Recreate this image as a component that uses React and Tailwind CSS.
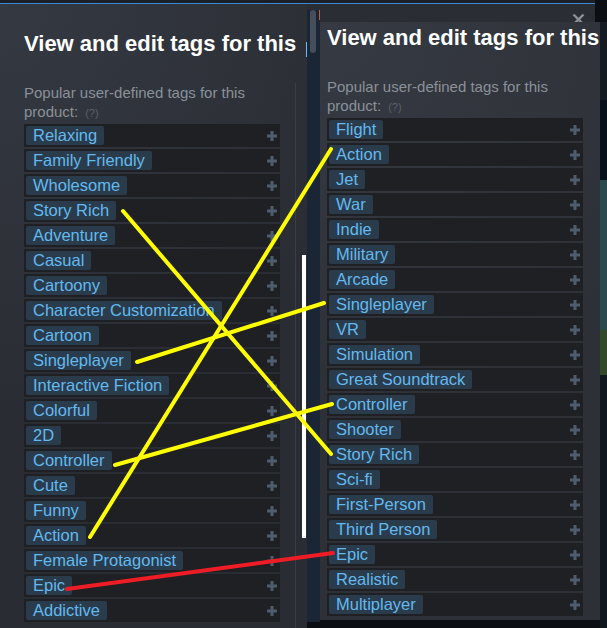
import React from "react";

const LEFT = [
  "Relaxing",
  "Family Friendly",
  "Wholesome",
  "Story Rich",
  "Adventure",
  "Casual",
  "Cartoony",
  "Character Customization",
  "Cartoon",
  "Singleplayer",
  "Interactive Fiction",
  "Colorful",
  "2D",
  "Controller",
  "Cute",
  "Funny",
  "Action",
  "Female Protagonist",
  "Epic",
  "Addictive",
];

const RIGHT = [
  "Flight",
  "Action",
  "Jet",
  "War",
  "Indie",
  "Military",
  "Arcade",
  "Singleplayer",
  "VR",
  "Simulation",
  "Great Soundtrack",
  "Controller",
  "Shooter",
  "Story Rich",
  "Sci-fi",
  "First-Person",
  "Third Person",
  "Epic",
  "Realistic",
  "Multiplayer",
];

function Plus() {
  return (
    <svg width="10" height="10" viewBox="0 0 10 10" className="shrink-0 self-center">
      <rect x="3.5" y="0" width="3" height="10" fill="#4d5d6e" />
      <rect x="0" y="3.5" width="10" height="3" fill="#4d5d6e" />
    </svg>
  );
}

function TagRow({ label }) {
  return (
    <div className="flex h-[23px] items-start justify-between bg-[#1f2024] pl-[2px] pr-[3px]">
      <span className="mt-[2px] flex h-[19px] items-center rounded-[2px] bg-[#2a3c4c] px-[7px] text-[16.5px] leading-none text-[#63b9ef] whitespace-nowrap">
        {label}
      </span>
      <Plus />
    </div>
  );
}

function Subtitle() {
  return (
    <p className="h-[38px] text-[15px] leading-[19px] text-[#8a9199]">
      Popular user-defined tags for this product:
      <span className="ml-[7px] text-[11px] leading-none text-[#59616b]">(?)</span>
    </p>
  );
}

function TagList({ tags }) {
  return (
    <div className="mt-[3px] flex w-[256px] flex-col gap-[2px]">
      {tags.map((t, i) => (
        <TagRow key={i} label={t} />
      ))}
    </div>
  );
}

export default function App() {
  return (
    <div
      className="relative flex h-[628px] w-[607px] flex-col overflow-hidden bg-[#0b0e12]"
      style={{ fontFamily: '"Liberation Sans", Arial, sans-serif' }}
    >
      {/* top bar */}
      <div className="flex h-[4px] w-[595px] flex-col">
        <div className="h-[3px] bg-[#1c1f25]" />
        <div className="h-[1px] bg-[#3a8ad6]" />
      </div>

      <div className="flex flex-1">
        {/* left dialog */}
        <div className="flex w-[307px] flex-col bg-[#292c33] bg-[radial-gradient(circle_at_top_left,rgba(74,81,92,0.35)_0%,rgba(75,81,92,0)_60%)] pl-[24px]">
          <div className="flex items-start justify-between pt-[26px]">
            <h1 className="whitespace-nowrap text-[22px] font-bold leading-[28px] text-white">
              View and edit tags for this
            </h1>
            <span className="mt-[12px] h-[15px] w-[1px] bg-[#67c1f5]" />
          </div>
          <div className="mt-[25px] flex w-[272px] flex-1 flex-col border-r border-[#393d45] pr-[16px]">
            <Subtitle />
            <TagList tags={LEFT} />
          </div>
        </div>

        {/* scroll strip */}
        <div className="flex w-[13px] flex-col">
          <div className="h-[6px] bg-[#2a2d34]" />
          <div className="relative flex flex-1 flex-col bg-[#1a2535] pl-[3px]">
            <div className="h-[43px] w-[6px] rounded-full bg-[#454f5c]" />
            <div className="absolute right-0 top-0 h-[10px] w-[1px] bg-[#c0602a]" />
          </div>
          <div className="h-[6px] bg-[#0b0e12]" />
        </div>

        {/* right column */}
        <div className="flex w-[280px] flex-col">
          <div className="flex h-[18px]">
            <div className="relative w-[275px] overflow-hidden bg-[#2a2d34]">
              <svg
                width="13"
                height="13"
                viewBox="0 0 13 13"
                className="absolute left-[252px] top-[9px]"
              >
                <path d="M1.5 1.5 L11.5 11.5 M11.5 1.5 L1.5 11.5" stroke="#8b9097" strokeWidth="2.4" />
              </svg>
            </div>
            <div className="w-[5px] bg-[#0b0e12]" />
          </div>
          <div className="flex h-[598px] flex-col overflow-hidden bg-[#2d3037] bg-[radial-gradient(circle_at_top_left,rgba(74,81,92,0.3)_0%,rgba(75,81,92,0)_60%)] pl-[7px]">
            <h1 className="pt-[2px] whitespace-nowrap text-[22px] font-bold leading-[28px] text-white">
              View and edit tags for this product
            </h1>
            <div className="mt-[25px] w-[262px]">
              <Subtitle />
            </div>
            <TagList tags={RIGHT} />
          </div>
          <div className="flex-1 bg-[#0b0e12]" />
        </div>

        {/* underlying page sliver */}
        <div className="flex w-[7px] flex-col">
          <div className="h-[18px] bg-[#0b0e12]" />
          <div className="h-[78px] bg-[#151b22]" />
          <div className="h-[80px] bg-[#08111b]" />
          <div className="h-[150px] bg-[#2b4a50]" />
          <div className="h-[45px] bg-[#34482c]" />
          <div className="flex-1 bg-[#11171e]" />
        </div>
      </div>

      {/* annotations */}
      <svg
        className="pointer-events-none absolute inset-0"
        width="607"
        height="628"
        viewBox="0 0 607 628"
      >
        <rect x="302" y="255" width="4" height="283" fill="#ffffff" />
        <g stroke="#ffff00" strokeWidth="4" strokeLinecap="round">
          <line x1="123" y1="211" x2="331" y2="454" />
          <line x1="90" y1="537" x2="331" y2="149" />
          <line x1="137" y1="362" x2="324" y2="303" />
          <line x1="115" y1="465" x2="332" y2="404" />
        </g>
        <line x1="67" y1="589" x2="333" y2="553" stroke="#ee1c24" strokeWidth="4" strokeLinecap="round" />
      </svg>
    </div>
  );
}
